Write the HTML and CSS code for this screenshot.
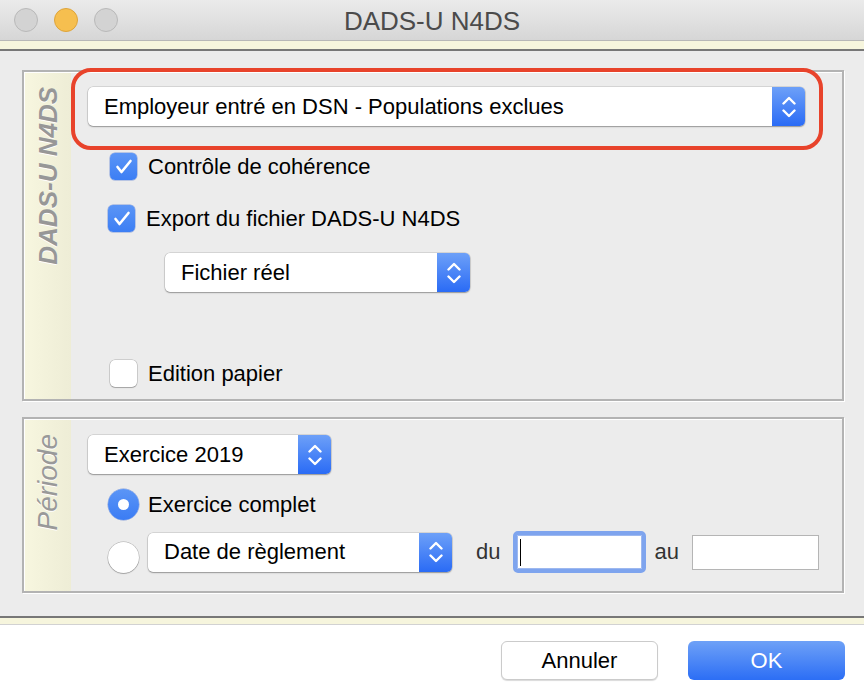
FILE: index.html
```html
<!DOCTYPE html>
<html>
<head>
    <meta charset="utf-8">
    <title>DADS-U N4DS</title>
    <link rel="stylesheet" href="styles.css">
</head>
<body>
    <div class="window">
        <div class="titlebar">
            <div class="lights">
                <span class="light"></span>
                <span class="light light-min"></span>
                <span class="light"></span>
            </div>
            <div class="title">DADS-U N4DS</div>
        </div>
        <div class="strip strip-top"></div>

        <div class="content">
            <!-- groupe DADS-U -->
            <div class="group group-dads">
                <div class="side"><span class="side-label side-bold">DADS-U N4DS</span></div>
                <div class="group-body">
                    <div class="popup popup-type">
                        <span class="popup-text">Employeur entré en DSN - Populations exclues</span>
                        <span class="stepper">
                            <svg width="14" height="24" viewBox="0 0 14 24"><path d="M1.5 8.5 L7 3 L12.5 8.5 M1.5 15.5 L7 21 L12.5 15.5" fill="none" stroke="#fff" stroke-width="2.4" stroke-linecap="round" stroke-linejoin="round"/></svg>
                        </span>
                    </div>
                    <label class="check-row row-coherence">
                        <span class="check checked">
                            <svg width="27" height="27" viewBox="0 0 27 27"><path d="M7.5 14 L11.5 19 L20.5 8" fill="none" stroke="#fff" stroke-width="2.6" stroke-linecap="round" stroke-linejoin="round"/></svg>
                        </span>
                        <span class="label">Contrôle de cohérence</span>
                    </label>
                    <label class="check-row row-export">
                        <span class="check checked">
                            <svg width="27" height="27" viewBox="0 0 27 27"><path d="M7.5 14 L11.5 19 L20.5 8" fill="none" stroke="#fff" stroke-width="2.6" stroke-linecap="round" stroke-linejoin="round"/></svg>
                        </span>
                        <span class="label">Export du fichier DADS-U N4DS</span>
                    </label>
                    <div class="popup popup-fichier">
                        <span class="popup-text">Fichier réel</span>
                        <span class="stepper">
                            <svg width="14" height="24" viewBox="0 0 14 24"><path d="M1.5 8.5 L7 3 L12.5 8.5 M1.5 15.5 L7 21 L12.5 15.5" fill="none" stroke="#fff" stroke-width="2.4" stroke-linecap="round" stroke-linejoin="round"/></svg>
                        </span>
                    </div>
                    <label class="check-row row-papier">
                        <span class="check"></span>
                        <span class="label">Edition papier</span>
                    </label>
                </div>
                <div class="highlight"></div>
            </div>

            <!-- groupe Période -->
            <div class="group group-periode">
                <div class="side"><span class="side-label side-periode">Période</span></div>
                <div class="group-body">
                    <div class="popup popup-exercice">
                        <span class="popup-text">Exercice 2019</span>
                        <span class="stepper">
                            <svg width="14" height="24" viewBox="0 0 14 24"><path d="M1.5 8.5 L7 3 L12.5 8.5 M1.5 15.5 L7 21 L12.5 15.5" fill="none" stroke="#fff" stroke-width="2.4" stroke-linecap="round" stroke-linejoin="round"/></svg>
                        </span>
                    </div>
                    <label class="radio-row row-complet">
                        <span class="radio checked"></span>
                        <span class="label">Exercice complet</span>
                    </label>
                    <div class="radio-row row-date">
                        <span class="radio"></span>
                        <div class="popup popup-date">
                            <span class="popup-text">Date de règlement</span>
                            <span class="stepper">
                                <svg width="14" height="24" viewBox="0 0 14 24"><path d="M1.5 8.5 L7 3 L12.5 8.5 M1.5 15.5 L7 21 L12.5 15.5" fill="none" stroke="#fff" stroke-width="2.4" stroke-linecap="round" stroke-linejoin="round"/></svg>
                            </span>
                        </div>
                        <span class="small-label label-du">du</span>
                        <span class="field field-focus"><span class="caret"></span></span>
                        <span class="small-label label-au">au</span>
                        <span class="field"></span>
                    </div>
                </div>
            </div>
        </div>

        <div class="strip strip-bottom"></div>
        <div class="footer">
            <button class="btn btn-cancel">Annuler</button>
            <button class="btn btn-ok">OK</button>
        </div>
    </div>
</body>
</html>
```

FILE: styles.css
```css
* {
    margin: 0;
    padding: 0;
    box-sizing: border-box;
}
body{
    width: 864px;
    height: 698px;
    overflow: hidden;
    background: #fff;
    font-family: "Liberation Sans", Arial, sans-serif;
    color: #111;
}
.window{
    display: flex;
    flex-direction: column;
    height: 698px;
}

/* barre de titre */
.titlebar{
    height: 41px;
    flex: none;
    border-bottom: 1px solid #b7b7b7;
    background: linear-gradient(#ebebeb, #d6d6d6);
    display: flex;
    align-items: center;
    position: relative;
}
.lights{
    display: flex;
    gap: 16px;
    padding-left: 14px;
}
.light{
    width: 24px;
    height: 24px;
    border-radius: 50%;
    background: #d3d3d3;
    border: 1px solid #b9b9b9;
}
.light-min{
    background: #f6bf4f;
    border-color: #dea43a;
}
.title{
    position: absolute;
    left: 0;
    right: 0;
    top: 6px;
    text-align: center;
    font-size: 26px;
    color: #4b4b4b;
}
.strip{
    flex: none;
    background: #f6f5dd;
}
.strip-top{
    height: 10px;
    border-bottom: 2px solid #777;
}
.strip-bottom{
    height: 9px;
    border-top: 2px solid #777;
    border-bottom: 1px solid #d2d2d2;
}

/* contenu */
.content{
    flex: none;
    height: 565px;
    background: #ececec;
    padding: 19px 20px 0 22px;
    display: flex;
    flex-direction: column;
    gap: 16px;
}
.group{
    display: flex;
    flex: none;
    position: relative;
    border: 2px solid #b3b3b3;
    box-shadow: 1px 1px 0 #fff, inset 1px 1px 0 #fff;
}
.group-dads{
    height: 331px;
}
.group-periode{
    height: 176px;
}
.side{
    width: 46px;
    margin: 1px 0 0 1px;
    background: linear-gradient(90deg, #f7f6df, #eeedd6);
    display: flex;
    justify-content: center;
}
.side-label{
    writing-mode: vertical-rl;
    transform: rotate(180deg);
    font-size: 26px;
    font-style: italic;
    color: #9d9d9d;
    text-shadow: -1px 0 0 #fff;
    margin-top: 14px;
    height: max-content;
}
.side-bold{
    font-weight: bold;
    color: #979797;
}
.side-periode{
    font-size: 28px;
    color: #999;
}
.group-body{
    flex: 1;
    display: flex;
    flex-direction: column;
    align-items: flex-start;
    padding-left: 17px;
}
.group-dads .group-body{
    padding-top: 15px;
}
.group-periode .group-body{
    padding-top: 16px;
}

/* popups */
.popup{
    height: 39px;
    flex: none;
    background: #fff;
    border-radius: 5px;
    box-shadow: 0 0 0 0.5px rgba(0, 0, 0, 0.18), 0 1px 1.5px rgba(0, 0, 0, 0.3);
    display: flex;
    align-items: center;
    justify-content: space-between;
    font-size: 22px;
    color: #000;
}
.popup-text{
    padding-left: 16px;
    white-space: nowrap;
}
.stepper{
    width: 33px;
    height: 39px;
    border-radius: 0 5px 5px 0;
    background: linear-gradient(#6da0f8, #2a6bf5);
    display: flex;
    align-items: center;
    justify-content: center;
}
.popup-type{
    width: 717px;
}
.popup-fichier{
    width: 305px;
    margin: 21px 0 0 77px;
}
.popup-exercice{
    width: 243px;
}
.popup-date{
    width: 304px;
    margin-left: 9px;
}

/* cases à cocher */
.check-row, .radio-row{
    display: flex;
    align-items: center;
    font-size: 22px;
    color: #000;
}
.check{
    width: 27px;
    height: 27px;
    border-radius: 5px;
    background: #fff;
    box-shadow: 0 0 0 0.5px rgba(0, 0, 0, 0.25), 0 1px 1px rgba(0, 0, 0, 0.2);
    display: flex;
}
.check.checked{
    background: linear-gradient(#5b95f6, #3c7ef4);
    box-shadow: 0 0 0 0.5px rgba(30, 80, 200, 0.5);
}
.check-row .label{
    margin-left: 11px;
}
.row-coherence{
    margin: 27px 0 0 22px;
}
.row-export{
    margin: 25px 0 0 20px;
}
.row-papier{
    margin: 68px 0 0 22px;
}
.radio{
    width: 31px;
    height: 31px;
    border-radius: 50%;
    background: #fff;
    box-shadow: 0 0 0 0.5px rgba(0, 0, 0, 0.28), 0 1px 1px rgba(0, 0, 0, 0.2);
    flex-shrink: 0;
    display: flex;
    align-items: center;
    justify-content: center;
}
.radio.checked{
    background: linear-gradient(#5b95f6, #3b7cf4);
    box-shadow: 0 0 0 0.5px rgba(30, 80, 200, 0.5);
}
.radio.checked::after{
    content: "";
    width: 11px;
    height: 11px;
    border-radius: 50%;
    background: #fff;
}
.row-complet{
    margin: 15px 0 0 20px;
}
.row-complet .label{
    margin-left: 9px;
}
.row-date{
    margin: 11px 0 0 20px;
}
.row-date .radio{
    align-self: flex-end;
}
.small-label{
    color: #333;
    font-size: 22px;
}
.label-du{
    margin-left: 24px;
}
.label-au{
    margin-left: 8px;
}
.field{
    width: 127px;
    height: 35px;
    background: #fff;
    border: 1px solid #b5b5b5;
    margin-left: 13px;
}
.field-focus{
    width: 133px;
    height: 42px;
    border: 4px solid #7ea4ee;
    border-radius: 5px;
    box-shadow: inset 0 0 0 1px #9db8ef;
    padding: 4px 0 0 3px;
}
.caret{
    display: block;
    width: 1px;
    height: 27px;
    background: #000;
}

/* cadre rouge */
.highlight{
    position: absolute;
    left: 47px;
    top: -4px;
    width: 752px;
    height: 82px;
    border: 4px solid #e8432b;
    border-radius: 20px;
    pointer-events: none;
}

/* boutons */
.footer{
    flex: 1;
    background: #fff;
    display: flex;
    justify-content: flex-end;
    align-items: flex-start;
    gap: 30px;
    padding: 16px 19px 0 0;
}
.btn{
    width: 157px;
    height: 39px;
    border-radius: 6px;
    font-family: "Liberation Sans", Arial, sans-serif;
    font-size: 22px;
}
.btn-cancel{
    background: #fff;
    color: #000;
    border: 1px solid #cbcbcb;
    box-shadow: 0 1px 1px rgba(0, 0, 0, 0.15);
}
.btn-ok{
    background: linear-gradient(#6ea1f7, #2c6ef5);
    color: #fff;
    border: none;
}
```
